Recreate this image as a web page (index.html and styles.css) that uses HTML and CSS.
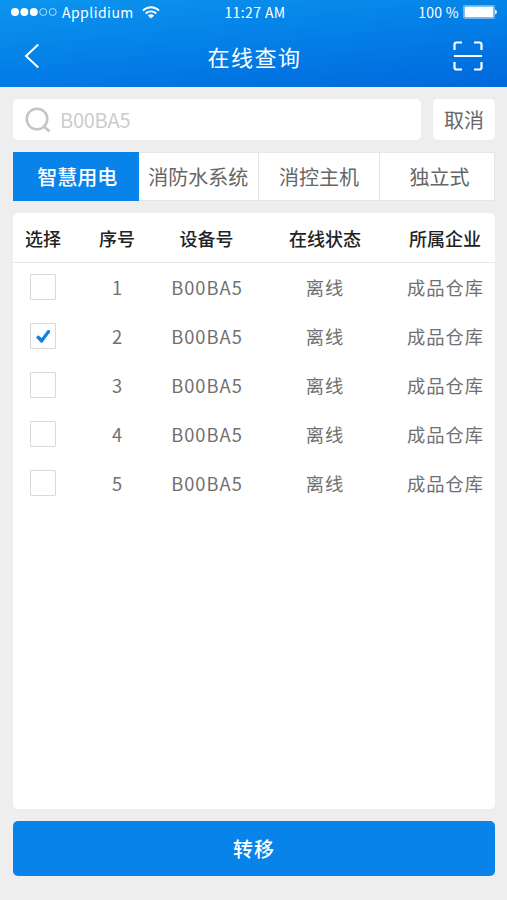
FILE: index.html
```html
<!DOCTYPE html>
<html lang="zh-CN">
<head>
<meta charset="utf-8">
<title>在线查询</title>
<link rel="stylesheet" href="styles.css">
</head>
<body>
<header class="header">
  <div class="status">
    <div class="status-left">
      <svg class="signal" width="46" height="10" viewBox="0 0 46 10"><g fill="#fff"><circle cx="4" cy="5" r="4"/><circle cx="13.3" cy="5" r="4"/><circle cx="22.8" cy="5" r="4"/></g><g fill="none" stroke="#fff" stroke-width=".8" opacity=".85"><circle cx="32.2" cy="5" r="3.5"/><circle cx="41.7" cy="5" r="3.5"/></g></svg>
      <span class="carrier">Applidium</span>
      <svg class="wifi" width="18" height="13" viewBox="0 0 18 13"><g fill="none" stroke="#fff" stroke-width="1.9"><path d="M1 4.600C5.500.2 12.500.2 17 4.600"/><path d="M3.700 7.500c3-2.900 7.600-2.900 10.600 0"/></g><path d="M5.800 9.400c1.900-1.700 4.500-1.700 6.400 0L9 12.600z" fill="#fff"/></svg>
    </div>
    <span class="clock">11:27 AM</span>
    <div class="status-right">
      <span class="percent">100 %</span>
      <svg width="34" height="14" viewBox="0 0 34 14"><rect x=".5" y=".5" width="31" height="13" rx="1" fill="none" stroke="#fff" stroke-opacity=".4"/><rect x="1.500" y="1.500" width="29" height="11" fill="#fff"/><path d="M32 4.500q2 .5 2 2.500t-2 2.500z" fill="#fff" fill-opacity=".85"/></svg>
    </div>
  </div>
  <div class="navbar">
    <svg class="back" width="16" height="26" viewBox="0 0 16 26"><path d="M14.300 1.500 2 13l12.300 11.500" fill="none" stroke="#fff" stroke-width="2"/></svg>
    <h1 class="title">在线查询</h1>
    <svg class="scan" width="30" height="30" viewBox="0 0 30 30"><path d="M1.500 9V3.500q0-2 2-2H9M21 1.500h5.500q2 0 2 2V9M1.500 21v5.500q0 2 2 2H9M21 28.500h5.500q2 0 2-2V21M1 15h28" fill="none" stroke="#fff" stroke-width="2.200"/></svg>
  </div>
</header>
<main class="main">
  <div class="search-row">
    <div class="search">
      <svg width="26" height="26" viewBox="0 0 26 26"><g fill="none" stroke="#c5c5c5" stroke-width="2.500"><circle cx="12" cy="12" r="10.300"/><path d="m18.500 19 6 5.500"/></g></svg>
      <span>B00BA5</span>
    </div>
    <div class="cancel">取消</div>
  </div>
  <nav class="tabs">
    <div class="tab active">智慧用电</div>
    <div class="tab">消防水系统</div>
    <div class="tab">消控主机</div>
    <div class="tab last">独立式</div>
  </nav>
  <section class="table">
    <div class="row head"><span>选择</span><span>序号</span><span>设备号</span><span>在线状态</span><span>所属企业</span></div>
    <div class="row"><i class="check"></i><span>1</span><span>B00BA5</span><span>离线</span><span>成品仓库</span></div>
    <div class="row"><i class="check"><svg width="14" height="13" viewBox="0 0 14 13"><path d="M0 7.400 2.200 5.200 5.700 7.900 11.700 0 14 .2v2L6.300 12.700H5z" fill="#0783ea"/></svg></i><span>2</span><span>B00BA5</span><span>离线</span><span>成品仓库</span></div>
    <div class="row"><i class="check"></i><span>3</span><span>B00BA5</span><span>离线</span><span>成品仓库</span></div>
    <div class="row"><i class="check"></i><span>4</span><span>B00BA5</span><span>离线</span><span>成品仓库</span></div>
    <div class="row"><i class="check"></i><span>5</span><span>B00BA5</span><span>离线</span><span>成品仓库</span></div>
  </section>
  <div class="transfer">转移</div>
</main>
</body>
</html>
```
FILE: styles.css
```css
* { box-sizing: border-box; }
body {
  margin: 0;
  height: 900px;
  background: #eee;
  color: #666;
  font-family: "Noto Sans CJK SC", sans-serif;
  white-space: nowrap;
}
svg { display: block; flex: none; }
.header {
  height: 87px;
  color: #fff;
  background: linear-gradient(174deg, #0c95ee 0%, #0480e7 48%, #0068dc 100%);
}
.status {
  height: 24px;
  padding: 0 10px 0 11px;
  display: grid;
  grid-template-columns: 1fr auto 1fr;
  align-items: center;
  font-size: 14px;
  line-height: 24px;
}
.status-left, .status-right { display: flex; align-items: center; }
.status-right { justify-content: flex-end; gap: 4px; }
.carrier { margin-left: 5px; letter-spacing: .45px; }
.wifi { margin-left: 8px; }
.clock { padding-left: 2px; letter-spacing: .4px; }
.percent { letter-spacing: .3px; }
.navbar {
  height: 64px;
  padding: 0 24px;
  display: grid;
  grid-template-columns: 1fr auto 1fr;
  align-items: center;
}
.title { margin: 0; padding-left: 2px; font-size: 22px; font-weight: 400; letter-spacing: 1.500px; line-height: 32px; }
.scan { justify-self: end; }
.main { padding: 12px 12px 0 13px; }
.search-row { display: flex; gap: 12px; height: 41px; }
.search {
  width: 408px;
  padding-left: 12px;
  display: flex;
  align-items: center;
  gap: 9px;
  background: #fff;
  border-radius: 5px;
  color: #ccc;
  font-size: 20px;
  letter-spacing: -.25px;
}
.cancel {
  flex: 1;
  background: #fff;
  border-radius: 5px;
  text-align: center;
  font-size: 20px;
  line-height: 42px;
}
.tabs {
  height: 49px;
  margin-top: 12px;
  display: grid;
  grid-template-columns: 125.500px 120.500px 121px 115px;
}
.tab {
  padding-top: 1px;
  background: #fff;
  border: 1px solid #e6e6e6;
  border-left: 0;
  text-align: center;
  font-size: 20px;
  line-height: 46px;
}
.last { padding-left: 5px; }
.active { padding-left: 4px; background: #0783ea; border-color: #0783ea; color: #fff; font-weight: 500; }
.table {
  height: 596px;
  margin-top: 12px;
  background: #fff;
  border-radius: 5px;
}
.row {
  height: 48.8px;
  display: grid;
  grid-template-columns: 60px 89px 90px 146px 95px;
  align-items: center;
  justify-items: center;
  color: #707070;
  font-size: 18.300px;
  letter-spacing: 1px;
}
.head {
  height: 50px;
  grid-template-columns: 60px 88px 91px 146px 94px;
  border-bottom: 1px solid #e8e8e8;
  color: #222;
  font-size: 18px;
  font-weight: 500;
  letter-spacing: 0;
}
.check {
  width: 26px;
  height: 26px;
  display: flex;
  align-items: center;
  justify-content: center;
  border: 1px solid #d9d9d9;
  border-radius: 1px;
}
.transfer {
  height: 54.500px;
  margin-top: 12px;
  background: #0783ea;
  border-radius: 5px;
  color: #fff;
  text-align: center;
  font-size: 20px;
  font-weight: 500;
  letter-spacing: 1px;
  line-height: 55px;
}
```
